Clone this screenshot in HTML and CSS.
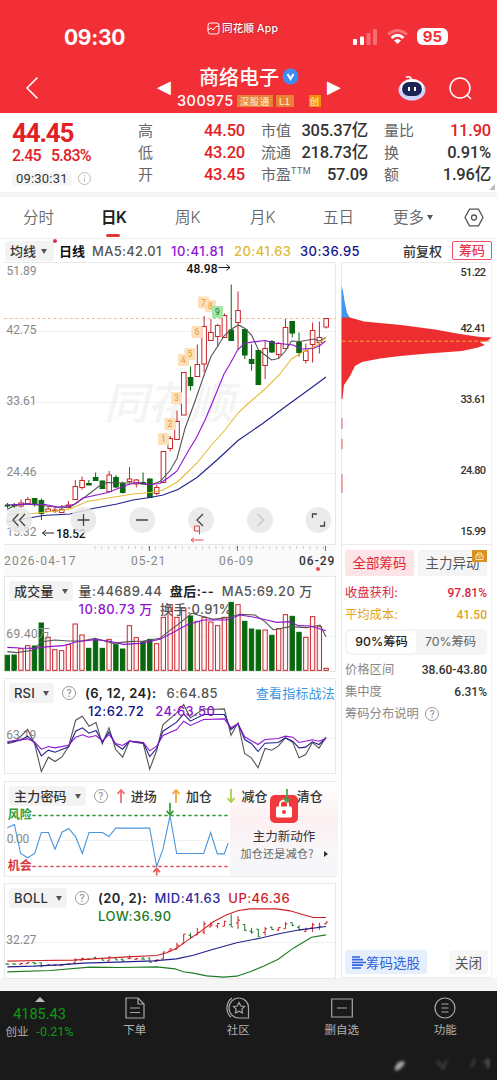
FILE: index.html
```html
<!DOCTYPE html>
<html lang="zh-CN">
<head>
  <meta charset="UTF-8">
  <meta name="viewport" content="width=device-width, initial-scale=1.0">
  <title>商络电子 300975</title>
  <link rel="stylesheet" href="styles.css">
</head>
<body>
  <header class="header">
    <div class="status-bar">
      <span class="clock">09:30</span>
      <span class="app-name">
        <svg width="13" height="13" viewBox="0 0 13 13"><rect x="1" y="1" width="11" height="11" rx="2.5"/><path d="M1 8 L4 6 L6 8 L9 4.500 L12 4"/></svg>
        同花顺 App
      </span>
      <span class="device">
        <svg width="26" height="18" viewBox="0 0 26 18"><rect x="1" y="11" width="4" height="6" rx="1"/><rect x="8" y="8.500" width="4" height="8.500" rx="1"/><rect class="dim" x="14.500" y="5" width="4" height="12" rx="1"/><rect class="dim" x="21" y="1" width="4" height="16" rx="1"/></svg>
        <svg class="wifi" width="21" height="16" viewBox="0 0 21 16"><path class="dim" d="M1 5.500 Q10.500 -2.500 20 5.500"/><path d="M4.500 9 Q10.500 3.500 16.500 9"/><path class="dot" d="M7 11.500 Q10.500 8.500 14 11.500 L10.500 15 Z"/></svg>
        <span class="battery">95</span>
      </span>
    </div>
    <div class="title-bar">
      <svg class="back" width="14" height="24" viewBox="0 0 14 24"><path d="M12.500 1.500 L2 12 L12.500 22.500"/></svg>
      <span class="arrow">◀</span>
      <div class="stock">
        <div class="stock-name">商络电子
          <svg width="17" height="17" viewBox="0 0 17 17"><circle cx="8.500" cy="8.500" r="8" fill="#3c8df2"/><path d="M5.500 6 L8.500 11 L11.500 6" fill="none" stroke="#fff" stroke-width="2"/></svg>
        </div>
        <div class="stock-code">300975<span class="tag">深股通</span><span class="tag">L1</span><span class="tag tag-new">创</span></div>
      </div>
      <span class="arrow">▶</span>
      <svg class="robot" width="28" height="26" viewBox="0 0 28 26">
        <path d="M8 2 L12 2 L14 5" fill="none" stroke="#fff" stroke-width="1.500"/>
        <ellipse cx="14" cy="15" rx="13.500" ry="10.500" fill="#cfd2fb"/>
        <ellipse cx="14" cy="12.500" rx="11.500" ry="8.500" fill="#fff"/>
        <rect x="4" y="7" width="20" height="14" rx="7" fill="#1b2454"/>
        <path d="M11 12 V16 M17 12 V16" stroke="#fff" stroke-width="2"/>
      </svg>
      <svg class="search" width="23" height="23" viewBox="0 0 23 23"><circle cx="11" cy="11" r="10"/><path d="M18 18 L22 22"/></svg>
    </div>
  </header>

  <section class="quote">
    <div class="price">
      <div class="price-now">44.45</div>
      <div class="price-diff"><span>2.45</span><span>5.83%</span></div>
      <div class="price-time"><span>09:30:31</span>
        <svg width="13" height="13" viewBox="0 0 13 13"><circle cx="6.500" cy="6.500" r="6"/><path d="M6.500 5.500 V10 M6.500 3 V4.200"/></svg>
      </div>
    </div>
    <dl class="col col-1">
      <dt>高</dt><dd class="up">44.50</dd>
      <dt>低</dt><dd class="up">43.20</dd>
      <dt>开</dt><dd class="up">43.45</dd>
    </dl>
    <dl class="col col-2">
      <dt>市值</dt><dd>305.37亿</dd>
      <dt>流通</dt><dd>218.73亿</dd>
      <dt>市盈<sup>TTM</sup></dt><dd>57.09</dd>
    </dl>
    <dl class="col col-3">
      <dt>量比</dt><dd class="up">11.90</dd>
      <dt>换</dt><dd>0.91%</dd>
      <dt>额</dt><dd>1.96亿</dd>
    </dl>
    <i class="corner"></i>
  </section>

  <nav class="tabs">
    <span>分时</span>
    <span class="active">日K</span>
    <span>周K</span>
    <span>月K</span>
    <span>五日</span>
    <span class="more">更多<i class="caret"></i></span>
    <svg width="20" height="19" viewBox="0 0 20 19"><path d="M5.500 1.200 H14.500 L19 9.500 L14.500 17.800 H5.500 L1 9.500 Z"/><circle cx="10" cy="9.500" r="2.500"/></svg>
  </nav>

  <div class="ma-row">
    <span class="pill pill-ma">均线<i class="caret"></i></span>
    <b>日线</b>
    <span class="ma5">MA5:42.01</span>
    <span class="ma10">10:41.81</span>
    <span class="ma20">20:41.63</span>
    <span class="ma30">30:36.95</span>
    <span class="fuquan">前复权</span>
    <span class="chip-btn">筹码</span>
  </div>

  <main class="main">
    <div class="left">
      <div class="kline">
        <svg id="kline" width="332" height="282" viewBox="4 262 332 282">
          <text class="watermark" x="104" y="419" textLength="130">同花顺</text>
          <path class="grid" d="M4 331.500 H336 M4 402.500 H336 M4 473.500 H336"/>
          <path class="last-price" d="M4 318.500 H336"/>
          <g class="axis">
            <text x="6.500" y="274.500" textLength="30">51.89</text>
            <text x="6.500" y="334" textLength="30">42.75</text>
            <text x="6.500" y="405" textLength="30">33.61</text>
            <text x="6.500" y="476" textLength="30">24.46</text>
            <text x="6.500" y="536" textLength="30">15.32</text>
          </g>
          <g id="candles"></g>
          <polyline class="l-ma5" points="7,509.500 15,505.500 25,504 43,505.500 62,508 72,506 87,495.500 100,485.500 107,482.500 123,483 137,483 150,485 160,481.500 170,470.500 177,458.500 185,428.500 194,404 205,372.500 211,356.500 218.500,345 224,336 231.500,329 238.500,325 245,328.500 251.500,335 258.500,350 265,355 271.500,360 278.500,358.500 285,351.500 291.500,341 300,341.500 313.500,339 320,341 325.500,337.500"/>
          <polyline class="l-ma20" points="7,514 33,513.500 55,511 70,509 87,501.500 108,498 133,494 150,492.500 163,490 178,481.500 197,463 211.500,445 225,430 238,413 246.500,405 265,389 280,374 291.500,359 303.500,351.500 316.500,345.500 325.500,338"/>
          <polyline class="l-ma30" points="7,522 43,515.500 70,514 93,508.500 117,504 133,500 150,497.500 163,495 178,489.500 197,477.500 217,460 238,440.500 262,424 287,405.500 307,391 326,377"/>
          <polyline class="l-ma10" points="7,505 25,504 45,504.500 58,507 70,505.500 75,504 83,498 108,492.500 127,485 137,482.500 150,484.500 160,483.500 170,476.500 177,471 188,451.500 196.500,437.500 205,420 212,403.500 224,374 230,364 237.500,350 245,343 265,340.500 275,343 293,345 301.500,349 313,348.500 320,345.500 325.500,341"/>
          <g id="marks"></g>
          <g class="extreme">
            <text x="186.500" y="273" textLength="31">48.98</text>
            <text x="56" y="538" textLength="29.500">18.52</text>
            <path d="M218.500 267.500 H230 M226.500 264.500 L230 267.500 L226.500 270.500 M54 533 H42.500 M46 530 L42.500 533 L46 536"/>
          </g>
          <g class="tools">
            <circle cx="19" cy="520" r="13"/><circle cx="83.500" cy="520" r="13"/><circle cx="142" cy="520" r="13"/>
            <circle cx="201" cy="520" r="13"/><circle cx="260" cy="520" r="13"/><circle cx="318.500" cy="520" r="13"/>
            <path d="M18.500 514 L13 520 L18.500 526 M25 514 L19.500 520 L25 526 M77.500 520 H89.500 M83.500 514 V526 M136 520 H148 M203 514 L197 520 L203 526 M312.500 518 V514 H317 M324.500 521.500 V526 H320"/>
            <path class="off" d="M257.500 514 L263.500 520 L257.500 526"/>
          </g>
          <path class="flag" d="M199.500 534.500 V526 H194.500 V531 H199.500 M203.500 540 H191 M194 537.500 L191 540 L194 542.500"/>
        </svg>
      </div>
      <div class="dates">
        <svg id="ticks" width="332" height="8" viewBox="4 544 332 8"></svg>
        <div class="dates-row"><span>2026-04-17</span><span>05-21</span><span>06-09</span><b>06-29</b></div>
      </div>

      <section class="panel">
        <svg class="plot" viewBox="12 3 996 285">
          <path class="grid" d="M12 184 H1008"/>
          <g id="volumes"></g>
          <polyline class="l-ma5" points="22,230 50,233 100,226 125,200 165,195 205,198 245,198 285,190 340,205 385,200 430,198 480,190 505,170 545,140 575,115 640,133 680,128 720,118 765,120 795,140 820,165 870,155 920,158 960,150 978,185"/>
          <polyline class="l-ma10" points="22,217 60,219 100,220 145,215 190,212 230,200 285,194 325,198 370,208 420,205 480,193 515,175 560,150 610,135 680,135 720,120 770,128 800,135 830,142 870,140 895,152 930,153 978,167"/>
          <text class="scale" x="19" y="189" textLength="131">69.40万</text>
        </svg>
        <div class="panel-head">
          <span class="pill">成交量<i class="caret"></i></span>
          <div class="values vol-values">
            <span class="grey">量:44689.44</span><b>盘后:--</b><span class="grey">MA5:69.20 万</span><br>
            <span class="ma10">10:80.73 万</span><span class="grey">换手:0.91%</span>
          </div>
        </div>
      </section>

      <section class="panel">
        <svg class="plot" viewBox="12 12 996 282">
          <path class="grid" d="M12 190 H1008"/>
          <text class="scale" x="19" y="194" textLength="90">63.19</text>
          <polyline class="l-ma5" points="22,208 45,202 83,165 104,208 124,291 145,248 165,261 186,247 206,215 227,137 247,125 267,155 288,144 307,208 327,160 347,225 368,248 388,200 430,208 449,284 470,228 489,150 530,115 551,90 571,130 611,103 632,105 673,103 693,182 714,145 734,237 754,250 774,280 795,222 815,227 835,215 856,190 878,203 897,250 917,240 937,204 957,221 978,188"/>
          <polyline class="l-ma30" points="22,204 60,198 83,185 104,205 124,244 145,227 165,233 206,217 227,170 247,160 267,176 288,168 307,203 327,172 347,210 368,224 388,200 430,205 449,246 470,222 489,170 530,143 551,118 571,140 611,120 673,120 693,165 714,148 734,195 754,207 774,231 795,206 835,204 856,190 878,200 897,220 917,218 937,202 957,210 978,190"/>
          <polyline class="l-ma10" points="22,201 83,193 104,203 124,224 145,216 165,220 206,212 227,188 247,181 267,188 288,183 307,199 327,180 347,207 368,213 388,200 430,204 449,229 470,215 489,183 530,165 551,140 571,153 611,135 673,133 693,160 714,148 734,187 774,210 795,195 835,192 856,185 878,188 897,204 937,196 957,200 978,192"/>
        </svg>
        <div class="panel-head">
          <span class="pill">RSI<i class="caret"></i></span>
          <span class="help">?</span>
          <div class="values rsi-values">
            <b>(6, 12, 24):</b><span class="grey">6:64.85</span><br>
            <span class="ma30 indent">12:62.72</span><span class="ma10">24:63.50</span>
          </div>
          <span class="link">查看指标战法</span>
        </div>
      </section>

      <section class="panel">
        <svg class="plot" viewBox="12 18 996 282">
          <path class="grid" d="M12 195 H684"/>
          <path class="risk" d="M97 120 H684"/>
          <path class="chance" d="M97 273 H684"/>
          <text class="scale" x="20" y="202" textLength="68">0.00</text>
          <polyline class="l-blue" points="22,157 43,147 62,234 83,247 104,234 124,171 145,171 165,221 186,170 206,159 227,184 247,234 267,171 307,171 327,183 347,158 449,158 470,273 489,221 510,121 530,234 611,234 632,171 652,235 673,235 684,203"/>
          <text class="risk-text" x="23" y="129" textLength="72">风险</text>
          <text class="chance-text" x="23" y="283" textLength="72">机会</text>
          <path class="a-green" d="M510 82 V118 M500 106 L510 118 L520 106"/>
          <path class="a-red" d="M470 300 V280 M460 290 L470 279 L480 290"/>
        </svg>
        <div class="promo">
          <svg width="28" height="28" viewBox="0 0 28 28"><rect width="28" height="28" rx="5" fill="#f0383d"/><path d="M10 12 V9.500 a4 4 0 0 1 8 0 V12" fill="none" stroke="#fff" stroke-width="2"/><rect x="6" y="11.500" width="16" height="11" rx="1.500" fill="#fff"/><circle cx="14" cy="17" r="2" fill="#f0383d"/></svg>
          <strong>主力新动作</strong>
          <small>加仓还是减仓? <i></i></small>
        </div>
        <div class="panel-head">
          <span class="pill">主力密码<i class="caret"></i></span>
          <span class="help">?</span>
          <div class="signals">
            <span><svg width="8" height="14" viewBox="0 0 8 14" stroke="#f2686b"><path d="M4 14 V1 M0.500 5 L4 1 L7.500 5"/></svg>进场</span>
            <span><svg width="8" height="14" viewBox="0 0 8 14" stroke="#f5a23a"><path d="M4 14 V1 M0.500 5 L4 1 L7.500 5"/></svg>加仓</span>
            <span><svg width="8" height="14" viewBox="0 0 8 14" stroke="#a5cf3c"><path d="M4 0 V13 M0.500 9 L4 13 L7.500 9"/></svg>减仓</span>
            <span><svg width="8" height="14" viewBox="0 0 8 14" stroke="#3fa54a"><path d="M4 0 V13 M0.500 9 L4 13 L7.500 9"/></svg>清仓</span>
          </div>
        </div>
      </section>

      <section class="panel">
        <svg class="plot" viewBox="12 9 996 284">
          <path class="grid" d="M12 187 H1008"/>
          <text class="scale" x="19" y="192" textLength="90">32.27</text>
          <g id="boll"></g>
          <polyline class="l-up" points="22,243 120,241 220,240 280,236 380,230 470,226 500,218 530,204 560,182 600,155 640,125 680,104 715,91 750,86 830,86 870,92 910,104 940,112 978,112"/>
          <polyline class="l-mid" points="22,260 100,258 180,254 250,249 350,246 460,242 530,236 580,225 640,207 710,188 780,174 840,160 900,149 978,139"/>
          <polyline class="l-low" points="22,275 150,271 270,261 360,262 470,260 525,266 550,275 580,279 620,287 670,291 710,288 750,275 790,258 835,237 880,204 935,171 978,164"/>
        </svg>
        <div class="panel-head">
          <span class="pill">BOLL<i class="caret"></i></span>
          <span class="help">?</span>
          <div class="values boll-values">
            <b>(20, 2):</b><span class="mid">MID:41.63</span><span class="upper">UP:46.36</span><br>
            <span class="lower">LOW:36.90</span>
          </div>
        </div>
      </section>
    </div>

    <aside class="right">
      <svg class="chips" width="151" height="282" viewBox="341 262 151 282">
        <path fill="#3f97ee" d="M341.500 286 L343 291 L344.500 301 L347 313 L350 318 H341.500 Z"/>
        <path fill="#ed2d30" d="M341.500 317.500 H350 L364 321.500 L401 325 L435 329.500 L460 334 L480 337 L492 337.500 L487 341 L480 342.500 L485 345 L478 347.500 L462 351 L428 353.500 L400 356 L380 358.500 L362 362 L355 366 L350 376 L344 385 L342.500 399 H341.500 Z"/>
        <path stroke="#e25b5e" fill="none" d="M342 418 V429 M342 439 V449 M342 474 V493"/>
        <path stroke="#f5a83a" stroke-dasharray="4 2" d="M342 341.200 H492"/>
        <text x="460.500" y="276" textLength="25.500">51.22</text>
        <text x="460.500" y="332" textLength="25.500">42.41</text>
        <text x="460.500" y="403" textLength="25.500">33.61</text>
        <text x="460.500" y="474" textLength="25.500">24.80</text>
        <text x="460.500" y="535" textLength="25.500">15.99</text>
      </svg>
      <div class="chip-info">
        <div class="chip-tabs">
          <span class="on">全部筹码</span>
          <span>主力异动<i class="lock"><svg width="9" height="8" viewBox="0 0 9 8"><path d="M1 3 H8 V7.500 H1 Z M2.500 3 V1 H6.500 V3 M3 5.200 H6"/></svg></i></span>
        </div>
        <div class="line red"><span>收盘获利:</span><b>97.81%</b></div>
        <div class="line gold"><span>平均成本:</span><b>41.50</b></div>
        <div class="switch"><span class="on">90%筹码</span><span>70%筹码</span></div>
        <div class="line"><span>价格区间</span><b>38.60-43.80</b></div>
        <div class="line"><span>集中度</span><b>6.31%</b></div>
        <div class="line"><span>筹码分布说明 <i class="help">?</i></span></div>
      </div>
      <div class="chip-actions">
        <span class="pick"><svg width="14" height="13" viewBox="0 0 14 13"><path d="M0 1 H8 M0 3.700 H11 M0 6.500 H14 M0 9.200 H11 M0 12 H9"/></svg>筹码选股</span>
        <span class="close">关闭</span>
      </div>
    </aside>
  </main>

  <footer class="footer">
    <div class="index">
      <i></i>
      <strong>4185.43</strong>
      <div><span>创业</span><em>-0.21%</em></div>
    </div>
    <div class="item">
      <svg width="22" height="22" viewBox="0 0 22 22"><path d="M2 1 H14 L20 7 V21 H2 Z M14 1 V7 H20 M6 11 H16 M6 15.500 H16"/></svg>
      下单
    </div>
    <div class="item">
      <svg width="24" height="22" viewBox="0 0 24 22"><path d="M5 20 C-1 15 0 5 6 1 M13 1 a9.500 9.500 0 0 0 0 20 H22.500 V10.500 A9.500 9.500 0 0 0 13 1 Z M13 5.500 L14.800 9 L18.500 9.500 L15.800 12.200 L16.500 16 L13 14.200 L9.500 16 L10.200 12.200 L7.500 9.500 L11.200 9 Z"/></svg>
      社区
    </div>
    <div class="item">
      <svg width="22" height="22" viewBox="0 0 22 22"><path d="M0.700 2 H21.300 V20 H0.700 Z M6 11 H16"/></svg>
      删自选
    </div>
    <div class="item">
      <svg width="22" height="22" viewBox="0 0 22 22"><circle cx="11" cy="11" r="10"/><path d="M7.500 7 H14.500 M7.500 11 H14.500 M7.500 15 H14.500"/></svg>
      功能
    </div>
    <svg class="smudge" width="105" height="22" viewBox="0 0 105 22"><path d="M4 14 Q8 6 14 9 Q12 16 4 18 Z" fill="#aaa"/><path d="M46 8 L52 15 L56 7 M80 14 L84 6 M92 10 L98 6" stroke="#3a3a3a" stroke-width="3" fill="none"/><path d="M97 7 V15" stroke="#888" stroke-width="1.500"/></svg>
  </footer>
  <script src="charts.js"></script>
</body>
</html>
```

FILE: styles.css
```css
* {
  box-sizing: border-box;
}
body {
  margin: 0;
  width: 497px;
  height: 1080px;
  overflow: hidden;
  background-color: #f5f5f5;
  font-family: Roboto, "Noto Sans CJK SC", sans-serif;
  color: #333;
}
svg {
  display: block;
  flex: none;
}

/* header */
.header {
  height: 113px;
  background-color: #f22f37;
  color: #fff;
}
.status-bar {
  display: flex;
  height: 62px;
  padding: 21px 46px 0 64px;
}
.clock {
  width: 143px;
  padding-top: 4px;
  font: bold 21px/26px Inter, sans-serif;
  letter-spacing: -0.3px;
}
.app-name {
  display: flex;
  gap: 2px;
  height: 15px;
  align-items: center;
  width: 145px;
  font: 500 10.5px/15px Inter, "Noto Sans CJK SC", sans-serif;
  letter-spacing: 0.2px;
  text-shadow: 0 0 2px #8a1a20;
  white-space: nowrap;
}
.app-name svg {
  fill: none;
  stroke: #fff;
}
.device {
  display: flex;
  gap: 9px;
  padding-top: 7px;
}
.device svg {
  fill: #fff;
}
.device .dim {
  opacity: 0.3;
}
.device .wifi {
  fill: none;
  stroke: #fff;
  stroke-width: 3;
  margin-top: 1px;
}
.wifi .dot {
  fill: #fff;
  stroke: none;
}
.battery {
  width: 31px;
  height: 17px;
  border-radius: 6px;
  background-color: #fff;
  color: #f22f37;
  font: bold 15px/17px Inter, sans-serif;
  text-align: center;
}
.title-bar {
  display: flex;
  align-items: flex-start;
  padding-left: 25px;
}
.back,
.search {
  fill: none;
  stroke: #fff;
  stroke-width: 1.5;
}
.back {
  margin-top: 14px;
}
.arrow {
  width: 14px;
  margin: 13px 0 0 119px;
  font: 18px/24px "DejaVu Sans", sans-serif;
  text-indent: -1px;
}
.stock {
  width: 150px;
  margin-left: 5px;
}
.stock + .arrow {
  margin-left: 1px;
}
.stock-name {
  display: flex;
  gap: 3px;
  align-items: center;
  height: 29px;
  padding-left: 22px;
  font: 500 20px/29px "Noto Sans CJK SC", sans-serif;
  white-space: nowrap;
}
.stock-code {
  display: flex;
  gap: 3px;
  align-items: center;
  margin-top: 1px;
  font: 500 14.500px/18px Inter, sans-serif;
  letter-spacing: 0.5px;
}
.tag {
  padding: 0 3px;
  background-color: #e8823a;
  font: 500 9.500px/12px "Noto Sans CJK SC", sans-serif;
  color: #ffe3bb;
  white-space: nowrap;
}
.tag-new {
  margin-left: 12px;
  padding: 0 1px;
  background-color: #f78c0c;
}
.robot {
  margin: 13px 0 0 56px;
}
.search {
  margin: 15px 0 0 23px;
}

/* quote */
.quote {
  position: relative;
  display: flex;
  height: 84px;
  padding: 0 6px 0 12px;
  background-color: #fff;
  border-bottom: 5px solid #f5f5f5;
}
.price {
  width: 126px;
  color: #e12127;
}
.price-now {
  padding-top: 6px;
  font-size: 26px;
  line-height: 28px;
  font-weight: bold;
  letter-spacing: -1.2px;
}
.price-diff {
  display: flex;
  gap: 10px;
  font-size: 16px;
  line-height: 18px;
  font-weight: 500;
  letter-spacing: -0.7px;
}
.price-time {
  display: flex;
  gap: 6px;
  align-items: center;
  margin-top: 6px;
  color: #333;
}
.price-time span {
  padding: 0 4px;
  border-radius: 4px;
  background-color: #f6f6f6;
  font-size: 13px;
  line-height: 15px;
  letter-spacing: 0.2px;
}
.price-time svg {
  fill: none;
  stroke: #bbb;
}
.col {
  display: grid;
  grid-template-columns: 32px 1fr;
  grid-auto-rows: 22px;
  margin: 7px 0 0;
  line-height: 22px;
  white-space: nowrap;
}
.col-1 {
  width: 107px;
}
.col-2 {
  width: 107px;
  margin-left: 16px;
}
.col-3 {
  width: 107px;
  margin-left: 16px;
}
dt {
  font-size: 15px;
  color: #666;
}
dt sup {
  font-size: 9px;
  line-height: 0;
  letter-spacing: 0.5px;
}
dd {
  margin: 0;
  font-size: 16.500px;
  font-weight: 500;
  text-align: right;
  letter-spacing: -0.2px;
}
.up {
  color: #e12127;
}
.corner {
  position: absolute;
  right: 2px;
  bottom: 2px;
  border: 3px solid #bbb;
  border-top-color: transparent;
  border-left-color: transparent;
}

/* tabs */
.tabs {
  display: flex;
  height: 41px;
  padding: 8px 13px 0 23px;
  background-color: #fff;
  font: 350 15.500px/26px Inter, "Noto Sans CJK SC", sans-serif;
  color: #666;
}
.tabs span {
  width: 75px;
  white-space: nowrap;
}
.tabs .active {
  position: relative;
  margin-left: 3px;
  width: 74px;
  color: #222;
  font-weight: 600;
  letter-spacing: -0.5px;
}
.tabs .active::after {
  content: "";
  position: absolute;
  left: 5px;
  top: 29px;
  width: 14px;
  height: 3px;
  border-radius: 2px;
  background-color: #e03a35;
}
.tabs span:nth-child(4) {
  width: 73px;
}
.tabs span:nth-child(5) {
  width: 70px;
}
.tabs .more {
  width: 71px;
}
.tabs svg {
  margin-top: 3px;
  fill: none;
  stroke: #555;
  stroke-width: 1.3;
}
.caret {
  display: inline-block;
  margin-left: 5px;
  border: 3.5px solid transparent;
  border-top: 5px solid #555;
  border-bottom: 0;
  vertical-align: 2px;
}
.more .caret {
  margin-left: 3px;
  vertical-align: 3px;
}

/* moving averages */
.ma-row {
  display: flex;
  align-items: center;
  height: 24px;
  padding-left: 5px;
  border-top: 1px solid #eee;
  background-color: #fff;
  font: 500 13px/20px Inter, "Noto Sans CJK SC", sans-serif;
  white-space: nowrap;
}
.pill {
  height: 20px;
  padding: 0 5px;
  border-radius: 3px;
  background-color: #f3f3f3;
  color: #333;
  white-space: nowrap;
}
.pill-ma {
  position: relative;
  width: 49px;
  margin-right: 5px;
}
.pill-ma::after {
  content: "";
  position: absolute;
  top: -2px;
  right: -3px;
  width: 4px;
  height: 4px;
  border-radius: 2px;
  background-color: #d82f55;
}
.ma-row b {
  width: 33px;
  color: #111;
}
.ma5,
.grey {
  color: #555;
}
.ma10 {
  color: #9013d2;
}
.ma20 {
  color: #e0b82e;
}
.ma30 {
  color: #12128a;
}
.ma-row .ma5,
.ma-row .ma10,
.ma-row .ma20,
.ma-row .ma30 {
  width: 63px;
  letter-spacing: 0.45px;
}
.ma-row .ma5 {
  width: 79px;
  letter-spacing: 0.3px;
}
.ma-row .ma10 {
  letter-spacing: 0.6px;
}
.ma-row .ma20 {
  width: 66px;
}
.fuquan {
  margin-left: 40px;
}
.chip-btn {
  width: 40px;
  height: 19px;
  margin-left: 10px;
  border: 1px solid #ef5068;
  border-radius: 2px;
  color: #e8334d;
  line-height: 17px;
  text-align: center;
}

/* main area */
.main {
  display: flex;
  gap: 5px;
  height: 716px;
  padding: 0 5px 0 4px;
  background-color: #fff;
}
.left {
  width: 332px;
}
.kline {
  height: 283px;
  border: 1px solid #e8e8e8;
  border-width: 1px 1px 1px 0;
}
#kline {
  margin-top: -1px;
}
text {
  font-family: Roboto, "Noto Sans CJK SC", sans-serif;
}
.watermark {
  font: italic 500 44px "Noto Sans CJK SC", sans-serif;
  fill: #f4f4f4;
}
.grid {
  stroke: #f0f0f0;
}
.last-price {
  stroke: #e6c09a;
  stroke-dasharray: 3 2.5;
}
.axis {
  font-size: 12px;
  fill: #888;
}
polyline {
  fill: none;
  stroke-width: 1.1;
}
.plot polyline {
  stroke-width: 3.3;
}
.l-ma5 {
  stroke: #555;
}
.l-ma10 {
  stroke: #9013d2;
}
.l-ma20 {
  stroke: #e3bd35;
}
.l-ma30,
.l-mid {
  stroke: #20208c;
}
.l-up {
  stroke: #cf2027;
}
.l-low {
  stroke: #1c7a24;
}
.l-blue {
  stroke: #4a94db;
}
.rise {
  fill: #fff;
  stroke: #c9252b;
}
.fall {
  fill: #08680d;
  stroke: #08680d;
}
.mark {
  fill: #fde0b8;
}
.mark-text {
  font-size: 8.500px;
  fill: #e8963a;
  text-anchor: middle;
}
.mark-last {
  fill: #a5e6a5;
}
.mark-text.mark-last {
  fill: #17751b;
}
.extreme {
  font-size: 12px;
  font-weight: 500;
  fill: #111;
}
.extreme path,
.tools path {
  fill: none;
  stroke: #222;
}
.tools circle {
  fill: #e8e8e8;
  opacity: 0.85;
}
.tools path {
  stroke: #444;
  stroke-width: 1.3;
}
.tools .off {
  stroke: #c4c4c4;
}
.flag {
  fill: none;
  stroke: #e5484d;
}
.dates {
  height: 31px;
  background-color: #fafafa;
}
.tick {
  stroke: #ccc;
}
.dates-row {
  position: relative;
  display: flex;
  font-size: 12px;
  line-height: 16px;
  color: #888;
  letter-spacing: 1px;
}
.dates-row span:nth-child(1) {
  width: 127px;
  letter-spacing: 1.2px;
}
.dates-row span:nth-child(2) {
  width: 88px;
}
.dates-row span:nth-child(3) {
  width: 80px;
}
.dates-row b {
  font-weight: 500;
  color: #333;
}
.dates-row::after {
  content: "";
  position: absolute;
  left: 312px;
  top: 14px;
  width: 4px;
  height: 4px;
  border-radius: 2px;
  background-color: #e5484d;
}
.panel {
  position: relative;
  display: grid;
  height: 96px;
  margin-bottom: 6.300px;
  border: 1px solid #e8e8e8;
}
.plot {
  grid-area: 1 / 1;
  width: 332px;
  height: 95px;
  margin: -1px 0 0 -1px;
}
.plot .grid {
  stroke-width: 3;
}
.scale {
  font-size: 36px;
  fill: #888;
}
.vol {
  stroke-width: 3;
}
.vol.rise {
  fill: #fff6f6;
}
.panel-head {
  grid-area: 1 / 1;
  display: flex;
  align-items: flex-start;
  padding: 4px 0 0 4px;
  font: 500 13px/20px Inter, "Noto Sans CJK SC", sans-serif;
  z-index: 1;
}
.panel-head .pill {
  letter-spacing: 0.2px;
}
.panel-head .caret {
  margin-left: 8px;
}
.values {
  line-height: 18px;
  white-space: nowrap;
  letter-spacing: 0.45px;
}
.values span,
.values b {
  margin-right: 7.5px;
}
.values b {
  font-weight: 600;
  color: #222;
}
.vol-values {
  margin: 1px 0 0 6px;
}
.rsi-values {
  margin: 1px 0 0 9px;
}
.rsi-values b {
  margin-right: 10px;
}
.rsi-values .indent {
  margin-left: 3px;
  margin-right: 11px;
}
.boll-values {
  margin: 1px 0 0 9px;
}
.mid {
  color: #2b2b9b;
}
.upper {
  color: #cf2027;
}
.lower {
  color: #1c7a24;
}
.help {
  display: inline-block;
  flex: none;
  width: 14px;
  height: 14px;
  margin: 3px 0 0 8px;
  border: 1px solid #999;
  border-radius: 50%;
  color: #888;
  font: 10px/12px Inter, sans-serif;
  text-align: center;
}
.link {
  margin: 0 1px 0 auto;
  font-weight: 400;
  color: #3d97e0;
  letter-spacing: 0.2px;
  white-space: nowrap;
}
.risk,
.chance {
  stroke: #2e9b35;
  stroke-width: 4;
  stroke-dasharray: 10 8;
}
.chance {
  stroke: #dc5055;
}
.risk-text,
.chance-text {
  font-size: 36px;
  font-weight: bold;
  fill: #2e9b35;
}
.chance-text {
  fill: #d9383d;
}
.a-green,
.a-red {
  fill: none;
  stroke: #2e9b35;
  stroke-width: 5;
}
.a-red {
  stroke: #f0555a;
}
.signals {
  display: flex;
  margin-left: 9px;
}
.signals span {
  display: flex;
  gap: 6px;
  width: 55.300px;
}
.signals svg {
  margin-top: 3px;
  fill: none;
  stroke-width: 1.700;
}
.promo {
  grid-area: 1 / 1;
  justify-self: end;
  display: flex;
  flex-direction: column;
  align-items: center;
  width: 108px;
  padding-top: 13px;
  background: linear-gradient(#ffffff, #fdf0f2 40%, #f7f7f9 75%);
  white-space: nowrap;
}
.promo strong {
  margin-top: 4px;
  font: 400 12.500px/18px "Noto Sans CJK SC", sans-serif;
}
.promo small {
  font: 400 11px/17px "Noto Sans CJK SC", sans-serif;
  color: #666;
  letter-spacing: 0.3px;
}
.promo i {
  display: inline-block;
  margin-left: 7px;
  border: 3px solid transparent;
  border-left: 4px solid #333;
  border-right: 0;
  vertical-align: 1px;
}

/* chips */
.right {
  display: flex;
  flex-direction: column;
  width: 151px;
  border: 1px solid #eaeaea;
  border-right-color: #f0f0f0;
}
.chips {
  margin: -1px 0 0 -1px;
}
.chips text {
  font-size: 11px;
  font-weight: 500;
  fill: #333;
}
.chip-info {
  flex: 1;
  padding: 5px 4px 0 3px;
  border-top: 1px solid #eaeaea;
  font: 13px/22px Inter, "Noto Sans CJK SC", sans-serif;
}
.chip-tabs {
  display: flex;
  gap: 4px;
  margin-bottom: 6px;
}
.chip-tabs span {
  position: relative;
  width: 70px;
  height: 26px;
  border-radius: 2px;
  background-color: #f5f5f5;
  color: #555;
  font-size: 13.500px;
  line-height: 26px;
  text-align: center;
  white-space: nowrap;
}
.chip-tabs .on {
  background-color: #fde4e7;
  color: #e2273b;
}
.lock {
  position: absolute;
  top: 0;
  right: 0;
  display: flex;
  justify-content: center;
  align-items: center;
  width: 15px;
  height: 12px;
  background-color: #d9921f;
}
.lock svg {
  fill: none;
  stroke: #ffe6a8;
}
.line {
  display: flex;
  justify-content: space-between;
  align-items: center;
  height: 22px;
  font-size: 12.300px;
  color: #888;
  white-space: nowrap;
}
.line b {
  font-family: Roboto, sans-serif;
  font-size: 12px;
  font-weight: 500;
  color: #333;
}
.line .help {
  margin: 0 0 0 3px;
  font-style: normal;
}
.line.red,
.red b {
  color: #d9253a;
}
.line.gold,
.gold b {
  color: #e0a51c;
}
.switch {
  display: flex;
  height: 26px;
  margin: 3px 0 4px;
  padding: 2px;
  border-radius: 5px;
  background-color: #f4f4f4;
  font-size: 12.300px;
  color: #666;
}
.switch span {
  flex: 1;
  text-align: center;
  white-space: nowrap;
}
.switch .on {
  border-radius: 4px;
  background-color: #fff;
  color: #222;
  font-weight: 500;
}
.chip-actions {
  display: flex;
  justify-content: space-between;
  padding: 0 3px 3px 3px;
  font: 13.500px/24px "Noto Sans CJK SC", sans-serif;
}
.pick {
  display: flex;
  align-items: center;
  width: 82px;
  justify-content: center;
  border-radius: 3px;
  background-color: #e6effc;
  color: #2f62dc;
  white-space: nowrap;
}
.pick svg {
  stroke: #2f62dc;
  stroke-width: 1.700;
}
.close {
  width: 39px;
  border-radius: 3px;
  background-color: #f6f6f6;
  color: #555;
  text-align: center;
}

/* footer */
.footer {
  position: relative;
  display: flex;
  height: 89px;
  margin-top: 13px;
  background-color: #1a1a1a;
  color: #b0b0b0;
  font: 11.500px/16px Roboto, "Noto Sans CJK SC", sans-serif;
}
.index {
  display: flex;
  flex-direction: column;
  align-items: center;
  width: 83px;
  padding: 6px 4px 0 0;
  white-space: nowrap;
}
.index i {
  border: 5px solid transparent;
  border-bottom-color: #bbb;
  border-top: 0;
}
.index strong {
  margin: 4px 0 1px;
  color: #0f9a16;
  font-size: 14.500px;
  font-weight: 400;
  line-height: 17px;
}
.index div {
  display: flex;
  gap: 8px;
}
.index em {
  color: #0f9a16;
  font-size: 12.500px;
  font-style: normal;
}
.item {
  display: flex;
  flex-direction: column;
  align-items: center;
  width: 103.500px;
  padding-top: 6px;
}
.item svg {
  margin-bottom: 3px;
  fill: none;
  stroke: #a8a8a8;
  stroke-width: 1.200;
}
.smudge {
  position: absolute;
  left: 391px;
  top: 62px;
  filter: blur(1.500px);
}
```

FILE: charts.js
```js
const STEP = 6.78;
const START = 7.5;

// [direction, body top, body bottom, high, low]
const candles = [
  ['g', 505, 506, 503, 508], ['g', 505, 506, 503, 508], ['r', 503, 506, 499.5, 508.5], ['r', 499.5, 503.5, 497, 503.5],
  ['g', 498.5, 503.5, 498.5, 506.5], ['g', 500.5, 513.5, 498.5, 520], ['r', 509, 511.5, 506.5, 512], ['r', 510, 511, 506.5, 513],
  ['r', 509.5, 512.5, 505, 513], ['r', 505, 507.5, 501, 508.5], ['r', 486.5, 499.5, 480, 499.5], ['r', 480.5, 487.5, 476.5, 489.5],
  ['g', 483.5, 485, 480, 485], ['g', 477.5, 480.5, 472.5, 480.5], ['g', 481, 488.5, 480.5, 489], ['r', 475, 491.5, 471, 492],
  ['g', 477.5, 487, 475, 488], ['g', 483.5, 492.5, 481.5, 493.5], ['r', 479, 481.5, 467, 483], ['r', 480, 484, 479, 487.5],
  ['g', 482.5, 484, 472.5, 484.5], ['g', 479, 497.5, 478.5, 498], ['r', 487.5, 493.5, 485, 495], ['r', 451.5, 482.5, 451.5, 482.5],
  ['r', 438.5, 448.5, 436, 451.5], ['r', 421.5, 439.5, 410.5, 439.5], ['r', 372.5, 415, 372.5, 415], ['g', 377.5, 385.5, 366.5, 390.5],
  ['r', 364.5, 376.5, 344.5, 376.5], ['r', 326.5, 364, 316, 372.5], ['r', 332.5, 340.5, 319, 340.5], ['r', 325.5, 336.5, 324, 346.5],
  ['r', 315.5, 337.5, 313.5, 337.5], ['g', 330, 340.5, 284.5, 340.5], ['r', 310.5, 322.5, 291.5, 349], ['g', 329.5, 355, 329, 359],
  ['g', 359.5, 363.5, 344.5, 370.5], ['g', 350.5, 384.5, 350, 385], ['r', 348.5, 365.5, 340.5, 379], ['g', 341.5, 352, 340, 353],
  ['r', 343.5, 354.5, 342, 358.5], ['r', 327.5, 348.5, 319, 348.5], ['g', 321.5, 333, 321.5, 337.5], ['g', 342.5, 352.5, 332.5, 356.5],
  ['r', 351, 360.5, 343.5, 363.5], ['r', 330.5, 344.5, 322.5, 362.5], ['r', 337.5, 342.5, 321.5, 353.5], ['r', 318.5, 327, 318.5, 328.5]
];

const volumes = [
  241, 240, 221, 212, 213, 144, 187, 224, 227, 209, 147, 180, 220, 195, 220, 193,
  209, 222, 152, 188, 200, 193, 206, 127, 89, 127, 99, 123, 139, 127, 141, 152,
  127, 82, 89, 139, 162, 165, 165, 181, 161, 119, 124, 172, 187, 125, 155, 280
];

// nine-turn marks
const marks = [
  [163.5, 439], [170, 424], [176.5, 398], [183.5, 360], [190, 354], [197, 332], [203.5, 302.5], [210.5, 306], [217.5, 312]
];

let html = '';
candles.forEach(([dir, top, bottom, high, low], i) => {
  const x = START + i * STEP;
  const cls = dir === 'r' ? 'rise' : 'fall';
  html += `<path class="${cls}" d="M${x} ${high} V${low}"/>`;
  html += `<rect class="${cls}" x="${x - 2.3}" y="${top}" width="4.6" height="${bottom - top}"/>`;
});
document.getElementById('candles').innerHTML = html;

html = '';
marks.forEach(([x, y], i) => {
  const last = i === 8 ? ' mark-last' : '';
  html += `<rect class="mark${last}" x="${x - 5.5}" y="${y - 6}" width="11" height="12" rx="1"/>`;
  html += `<text class="mark-text${last}" x="${x}" y="${y + 3}">${i + 1}</text>`;
});
document.getElementById('marks').innerHTML = html;

html = '';
volumes.forEach((top, i) => {
  const cls = candles[i][0] === 'r' ? 'rise' : 'fall';
  html += `<rect class="vol ${cls}" x="${15.5 + i * 20.35}" y="${top}" width="13" height="${286 - top}"/>`;
});
document.getElementById('volumes').innerHTML = html;

// price bars of the BOLL panel share the k-line data
html = '';
candles.forEach(([dir, top, bottom, high, low], i) => {
  const x = 22 + i * 20.35;
  const y = v => 252 - (506 - v) * 0.675;
  const color = dir === 'r' ? '#cf2027' : '#1c7a24';
  const open = dir === 'r' ? bottom : top;
  const close = dir === 'r' ? top : bottom;
  html += `<path fill="none" stroke="${color}" stroke-width="3" d="M${x} ${y(high)} V${y(low)} M${x - 6} ${y(open)} H${x} M${x} ${y(close)} H${x + 6}"/>`;
});
document.getElementById('boll').innerHTML = html;

html = '';
for (let x = 95; x <= 326; x += 6.72) {
  html += `<path class="tick" d="M${x} 545 V548"/>`;
}
[149.5, 237.5, 325.5].forEach(x => {
  html += `<path stroke="#777" d="M${x} 545 V550"/>`;
});
document.getElementById('ticks').innerHTML = html;
```
